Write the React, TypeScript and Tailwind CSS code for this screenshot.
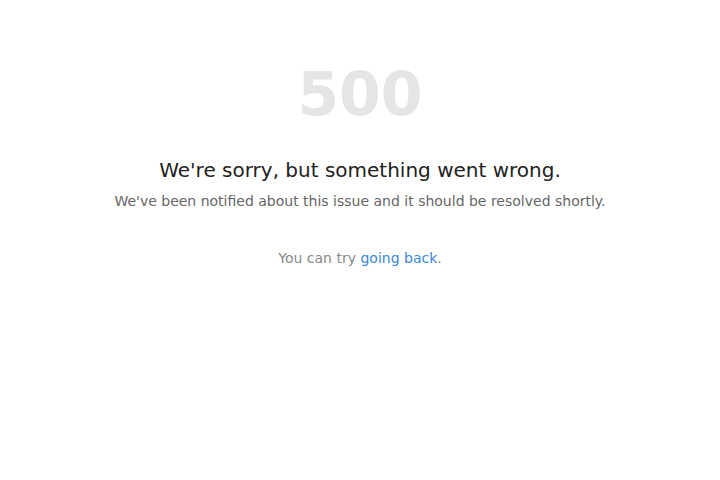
import React from "react";

export default function App() {
  return (
    <div className="w-[720px] h-[480px] bg-white flex flex-col items-center text-center" style={{ fontFamily: '"DejaVu Sans", sans-serif' }}>
      <div className="mt-[58px] text-[60px] leading-[72px] font-bold text-[#e5e5e5]">500</div>
      <h1 className="mt-[26px] text-[20px] leading-[28px] text-[#222]">We're sorry, but something went wrong.</h1>
      <p className="mt-[7px] text-[14px] leading-[20px] text-[#666]">We've been notified about this issue and it should be resolved shortly.</p>
      <p className="mt-[37px] text-[14px] leading-[20px] text-[#888]">
        You can try <a href="#" className="text-[#3a87d5]">going back</a>.
      </p>
    </div>
  );
}
